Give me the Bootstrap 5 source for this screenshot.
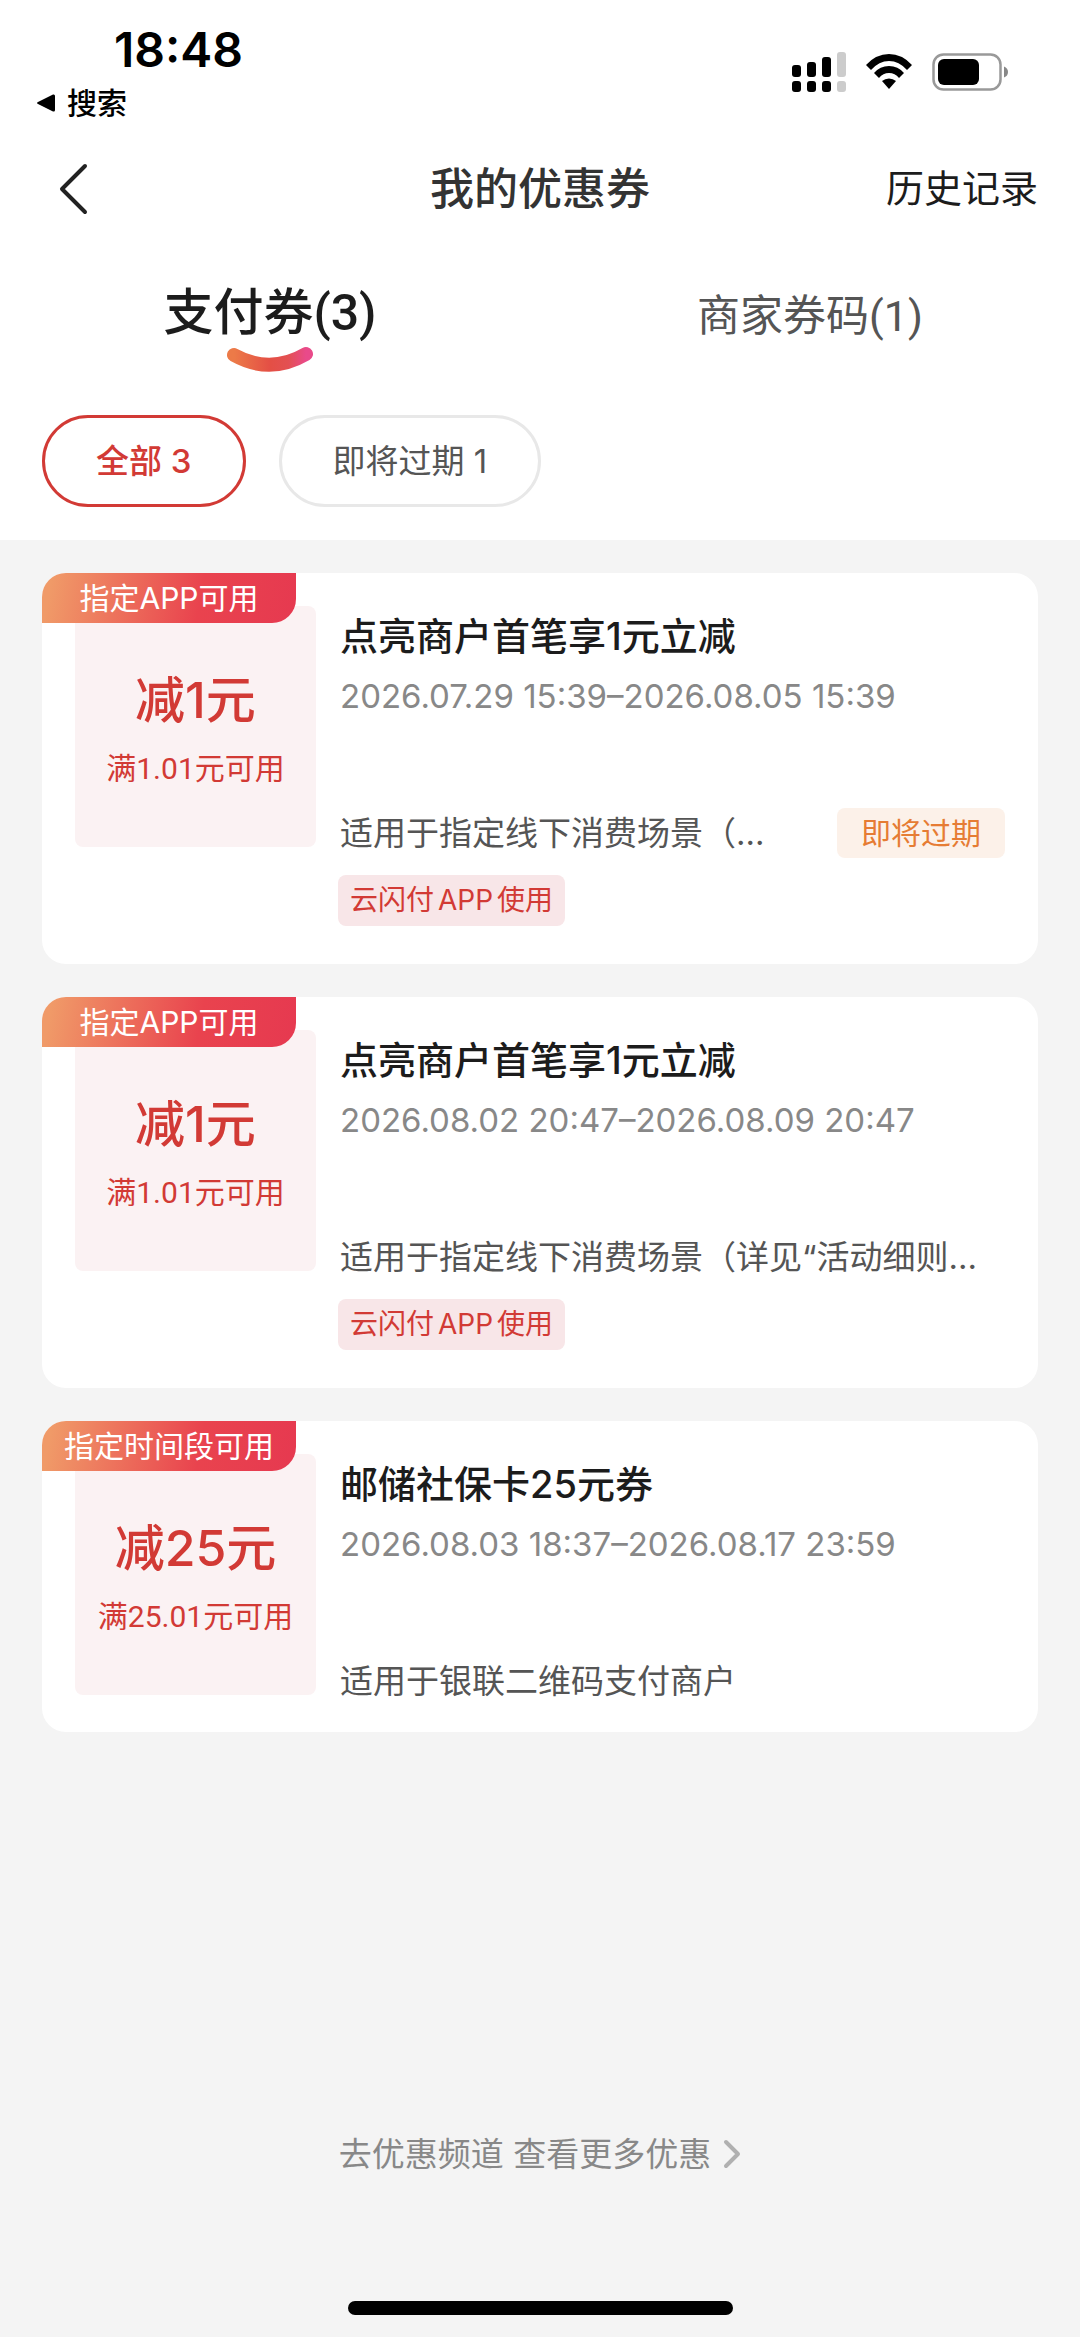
<!DOCTYPE html>
<html lang="zh-CN">
<head>
<meta charset="utf-8">
<meta name="viewport" content="width=device-width, initial-scale=1">
<title>我的优惠券</title>
<link href="https://cdn.jsdelivr.net/npm/bootstrap@5.3.0/dist/css/bootstrap.min.css" rel="stylesheet">
<style>
  :root { --brand: #d23a35; --ink: #1c1c1c; --gap: 33px; --edge: 42px; }
  body { font-family: Inter, "Noto Sans CJK SC", sans-serif; font-size: 33px; line-height: 48px; color: var(--ink); background: #f4f4f4; }
  svg { display: block; flex: none; }
  .edge-x { padding-left: var(--edge); padding-right: var(--edge); }

  .status-bar { height: 128px; padding: 24px 71px 0 36px; color: #000; }
  .clock { font-size: 48px; line-height: 52px; font-weight: 600; padding-left: 78px; }
  .back-app { font-size: 30px; line-height: 54px; font-weight: 500; gap: 11px; }
  .status-icons { gap: 20px; padding-top: 28px; }

  .title-bar { height: 121px; }
  .title-bar h1 { font-size: 44px; line-height: 64px; font-weight: 500; color: #333; }
  .title-bar a { font-size: 38px; color: var(--ink); }
  .back-btn { padding: 16px; }

  .coupon-tabs { padding-top: 31px; height: 166px; }
  .coupon-tabs .nav-link { padding: 0; font-size: 43px; line-height: 72px; color: #555; }
  .coupon-tabs .nav-link.active { font-size: 50px; line-height: 66px; font-weight: 500; color: var(--ink); }
  .latin { font-family: Roboto, "Noto Sans CJK SC", sans-serif; }

  .filters { gap: var(--gap); padding-bottom: var(--gap); }
  .filter-btn { font-size: 33px; line-height: 48px; padding: 19px 51px; border: 3px solid #e8e8e8; color: #555; }
  .filter-btn.active, .filter-btn.active:hover { border-color: var(--brand); color: var(--brand); background: #fff; font-weight: 500; }

  .coupons { gap: var(--gap); padding-top: var(--gap); }
  .coupon { border-radius: 24px; padding: 33px 33px 26px; }
  .ribbon { top: 0; left: 0; width: 254px; font-size: 30px; line-height: 50px; border-radius: 24px 0 24px 0; color: #fff; background: linear-gradient(100deg, #f09a68 4%, #e9434e 62%, #e63950); }
  .amount-box { width: 241px; height: 241px; border-radius: 8px; background: #fbf2f3; color: var(--brand); margin-right: 20px; padding-top: 58px; }
  .amount { font-size: 50px; line-height: 72px; font-weight: 500; }
  .limit { font-size: 30px; line-height: 66px; }
  .coupon h2 { font-size: 38px; line-height: 60px; font-weight: 500; }
  .period { line-height: 60px; color: #888; margin-bottom: 82px; }
  .scope { color: #555; line-height: 50px; }
  .soon { font-size: 30px; line-height: 50px; padding: 0 24px; border-radius: 8px; background: #fcf1e9; color: #e67c34; }
  .channel { font-size: 28px; line-height: 51px; padding: 0 12px; margin: 17px 0 12px -2px; border-radius: 8px; background: #f8e6e8; color: var(--brand); }

  .more-link { color: #888; gap: 12px; padding-bottom: 123px; }
  .home-bar { width: 385px; height: 14px; margin-bottom: 22px; background: #000; }
</style>
</head>
<body>
<div class="d-flex flex-column min-vh-100">

  <header class="bg-white">
    <div class="status-bar d-flex justify-content-between align-items-start">
      <div>
        <div class="clock">18:48</div>
        <div class="back-app d-flex align-items-center">
          <svg width="20" height="20" viewBox="0 0 20 20" aria-hidden="true"><path d="M2 9 17 1.5Q19 1 19 3V17Q19 19 17 18.500L2 11Q0 10 2 9Z"/></svg>
          搜索
        </div>
      </div>
      <div class="status-icons d-flex align-items-center">
        <svg width="54" height="40" viewBox="0 0 54 40" aria-label="信号">
          <rect y="13" width="9" height="12" rx="3"/><rect x="15" y="10" width="9" height="15" rx="3"/><rect x="30" y="5" width="9" height="20" rx="3"/><rect x="45" width="9" height="25" rx="3" fill="#ccc"/>
          <rect y="29" width="9" height="11" rx="3"/><rect x="15" y="29" width="9" height="11" rx="3"/><rect x="30" y="29" width="9" height="11" rx="3"/><rect x="45" y="29" width="9" height="11" rx="3" fill="#ccc"/>
        </svg>
        <svg width="46" height="36" viewBox="0 0 46 36" aria-label="无线网络">
          <path d="M0 11Q10 0 23 0T46 11L41 16Q33 7 23 7T5 16Z"/>
          <path d="M8 19Q14 12 23 12T38 19L33 24Q29 19 23 19T13 24Z"/>
          <path d="M16 27Q19 24.500 23 24.500T30 27L23 35Z"/>
        </svg>
        <svg width="77" height="38" viewBox="0 0 77 38" aria-label="电池">
          <rect x="1.500" y="1.500" width="67" height="35" rx="10" fill="none" stroke="#999" stroke-width="2.500"/>
          <rect x="6" y="6" width="41" height="26" rx="6"/><path d="M72 13.500Q76 15 76 19T72 24.500Z" fill="#888"/>
        </svg>
      </div>
    </div>

    <div class="title-bar edge-x d-flex align-items-center">
      <div class="flex-fill w-25">
        <button type="button" class="back-btn btn border-0" aria-label="返回">
          <svg width="30" height="52" viewBox="0 0 30 52" fill="none" stroke="#222" stroke-width="4" stroke-linecap="round" stroke-linejoin="round"><path d="M27 3 4 26 27 49"/></svg>
        </button>
      </div>
      <h1 class="m-0 text-nowrap">我的优惠券</h1>
      <div class="flex-fill w-25 text-end"><a href="#history" class="text-decoration-none">历史记录</a></div>
    </div>

    <nav class="coupon-tabs nav nav-fill align-items-start">
      <div class="nav-item w-50">
        <a class="nav-link latin active" href="#pay" aria-current="page">支付券(3)</a>
        <svg class="mx-auto" width="88" height="28" viewBox="0 0 88 28" aria-hidden="true">
          <defs><linearGradient id="smile" x1="0" x2="1"><stop offset="0" stop-color="#ec7a48"/><stop offset=".5" stop-color="#e44f45"/><stop offset=".75" stop-color="#e35052"/><stop offset="1" stop-color="#e94a8a"/></linearGradient></defs>
          <path d="M8 9Q44 29 80 8" fill="none" stroke="url(#smile)" stroke-width="14" stroke-linecap="round"/>
        </svg>
      </div>
      <div class="nav-item w-50"><a class="nav-link latin" href="#merchant">商家券码(1)</a></div>
    </nav>

    <div class="filters edge-x d-flex">
      <button type="button" class="filter-btn btn rounded-pill active">全部 3</button>
      <button type="button" class="filter-btn btn rounded-pill">即将过期 1</button>
    </div>
  </header>

  <main class="coupons edge-x d-flex flex-column">
    <article class="coupon bg-white position-relative d-flex align-items-start">
      <div class="amount-box flex-shrink-0 text-center">
        <div class="amount">减1元</div>
        <div class="limit latin">满1.01元可用</div>
      </div>
      <div class="ribbon position-absolute text-center">指定APP可用</div>
      <div class="flex-grow-1 overflow-hidden ps-1">
        <h2 class="m-0 text-truncate">点亮商户首笔享1元立减</h2>
        <div class="period">2026.07.29 15:39–2026.08.05 15:39</div>
        <div class="d-flex justify-content-between align-items-center">
          <div class="scope text-truncate">适用于指定线下消费场景（…</div>
          <span class="soon flex-shrink-0">即将过期</span>
        </div>
        <div class="d-flex"><span class="channel">云闪付<span class="mx-1">APP</span>使用</span></div>
      </div>
    </article>

    <article class="coupon bg-white position-relative d-flex align-items-start">
      <div class="amount-box flex-shrink-0 text-center">
        <div class="amount">减1元</div>
        <div class="limit latin">满1.01元可用</div>
      </div>
      <div class="ribbon position-absolute text-center">指定APP可用</div>
      <div class="flex-grow-1 overflow-hidden ps-1">
        <h2 class="m-0 text-truncate">点亮商户首笔享1元立减</h2>
        <div class="period">2026.08.02 20:47–2026.08.09 20:47</div>
        <div class="scope text-truncate">适用于指定线下消费场景（详见“活动细则…</div>
        <div class="d-flex"><span class="channel">云闪付<span class="mx-1">APP</span>使用</span></div>
      </div>
    </article>

    <article class="coupon bg-white position-relative d-flex align-items-start">
      <div class="amount-box flex-shrink-0 text-center">
        <div class="amount">减25元</div>
        <div class="limit latin">满25.01元可用</div>
      </div>
      <div class="ribbon position-absolute text-center">指定时间段可用</div>
      <div class="flex-grow-1 overflow-hidden ps-1">
        <h2 class="m-0 text-truncate">邮储社保卡25元券</h2>
        <div class="period">2026.08.03 18:37–2026.08.17 23:59</div>
        <div class="scope text-truncate">适用于银联二维码支付商户</div>
      </div>
    </article>
  </main>

  <footer class="mt-auto d-flex flex-column align-items-center">
    <a href="#channel" class="more-link d-flex align-items-center text-decoration-none">去优惠频道 查看更多优惠
      <svg width="18" height="30" viewBox="0 0 18 30" fill="none" stroke="#b0b0b0" stroke-width="4" stroke-linecap="round" stroke-linejoin="round"><path d="M3 3 15 15 3 27"/></svg>
    </a>
    <div class="home-bar rounded-pill"></div>
  </footer>
</div>
<script src="https://cdn.jsdelivr.net/npm/bootstrap@5.3.0/dist/js/bootstrap.bundle.min.js"></script>
</body>
</html>
